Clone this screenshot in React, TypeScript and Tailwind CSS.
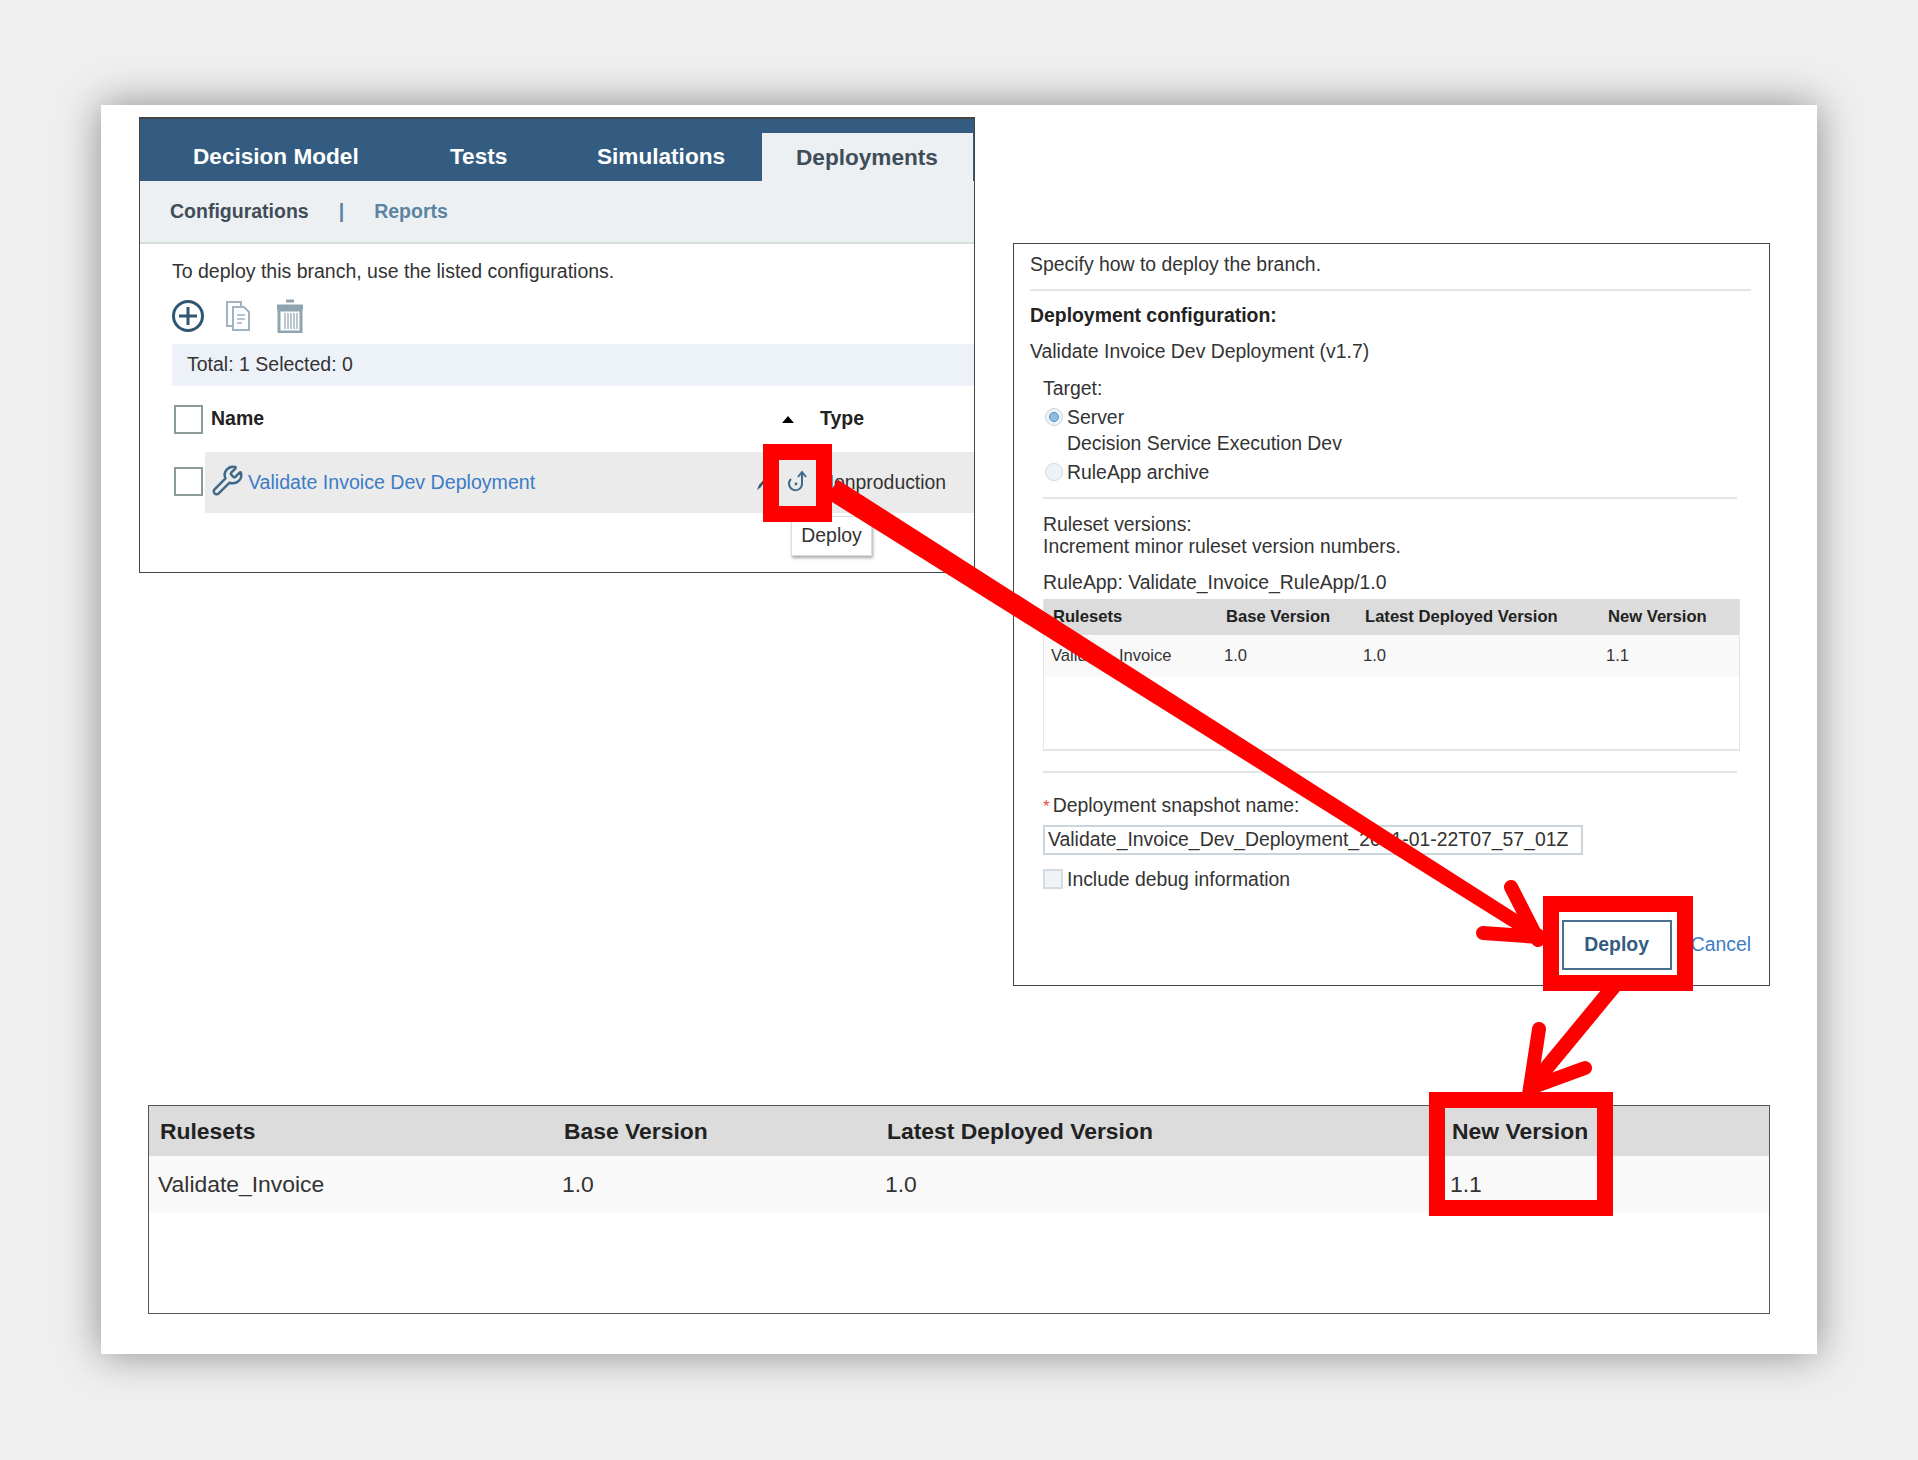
import { Wrench } from "lucide-react";

const sans = "font-['Liberation_Sans',Arial,sans-serif]";

function Checkbox({ className }: { className: string }) {
  return <div className={`h-[29px] w-[29px] shrink-0 border-2 border-[#8b9a9a] bg-white ${className}`} />;
}

function Radio({ selected }: { selected?: boolean }) {
  return (
    <div className="flex h-[18px] w-[18px] shrink-0 items-center justify-center rounded-full border border-[#cdd5dd] bg-[#eef3f8]">
      {selected && <div className="h-[10px] w-[10px] rounded-full border border-[#4b8fc4] bg-[#8fbde0]" />}
    </div>
  );
}

function DeployTabs() {
  return (
    <div className="flex h-[62px] items-end bg-[#335c80] text-[22.6px] font-bold">
      <div className="flex h-[48px] items-start pl-[53px] text-white">
        <span className="mt-[11px] w-[257px] leading-[26px]">Decision Model</span>
        <span className="mt-[11px] w-[147px] leading-[26px]">Tests</span>
        <span className="mt-[11px] w-[165px] leading-[26px]">Simulations</span>
      </div>
      <div className="flex h-[48px] w-[211px] items-start bg-[#edf0f3] pl-[34px] pt-[12px] leading-[26px] text-[#3f4d58]">
        Deployments
      </div>
    </div>
  );
}

function Toolbar() {
  return (
    <div className="mt-[15px] flex h-[36px] items-center pl-[31px]">
      <svg width="34" height="34" viewBox="0 0 34 34" fill="none" stroke="#2f5673" strokeWidth="3">
        <circle cx="17" cy="17" r="14.5" />
        <path d="M17 8v18M8 17h18" />
      </svg>
      <svg className="ml-[20px]" width="26" height="32" viewBox="0 0 26 32" fill="white" stroke="#9fb3c0" strokeWidth="2">
        <path d="M2 2h14v24H2z" />
        <path d="M8 7h11l5 5v18H8z" />
        <path d="M12 15h8M12 19h8M12 23h5" strokeWidth="1.5" />
      </svg>
      <svg className="ml-[25px]" width="28" height="34" viewBox="0 0 28 34" fill="none" stroke="#8fa3b0" strokeWidth="2">
        <path d="M10 2h8" strokeWidth="3" />
        <path d="M1 8h26" strokeWidth="5" />
        <path d="M3 11h22v22H3z" strokeWidth="3" />
        <path d="M9 14v16M12 14v16M15 14v16M18 14v16M21 14v16" strokeWidth="1.2" />
      </svg>
    </div>
  );
}

function ConfigRow() {
  return (
    <div className="relative mt-[18px] flex h-[61px] items-center pl-[33px]">
      <Checkbox className="absolute left-[34px] top-[15px]" />
      <div className="ml-[32px] flex h-[61px] flex-1 items-center bg-[#ebebeb] pl-[6px]">
        <Wrench size={33} strokeWidth={1.8} color="#3f6a8a" className="-translate-y-[2px]" />
        <span className="ml-[4px] w-[508px] text-[19.6px] text-[#3d7cc4]">Validate Invoice Dev Deployment</span>
        <svg width="12" height="16" viewBox="0 0 12 16" className="mr-[52px]">
          <path d="M1 15l2-5 7-8 1 1-6 9z" fill="#2f5673" />
        </svg>
        <span className="text-[19.4px] text-[#333]">Nonproduction</span>
      </div>
      <svg className="absolute left-[647px] top-[17px]" width="22" height="24" viewBox="0 0 22 24" fill="none" stroke="#3f6a8a" strokeWidth="2">
        <path d="M15 4v11a6.5 6.5 0 1 1-11-5" />
        <path d="M11 8l4-5 4 5" />
        <circle cx="9" cy="15" r="1.4" fill="#3f6a8a" stroke="none" />
      </svg>
      <div className="absolute left-[651px] top-[64px] flex h-[40px] w-[81px] items-center justify-center border border-[#ddd] bg-white text-[19.4px] text-[#333] shadow-[1px_2px_3px_rgba(0,0,0,0.35)]">
        Deploy
      </div>
    </div>
  );
}

function LeftPanel() {
  return (
    <div className="h-[456px] w-[836px] shrink-0 border border-t-2 border-[#444] bg-white">
      <DeployTabs />
      <div className="flex h-[63px] items-center border-b-2 border-[#d6dddd] bg-[#edf0f3] text-[19.5px] font-bold">
        <span className="ml-[30px] text-[#3f4d58]">Configurations</span>
        <span className="ml-[30px] text-[#5b84a3]">|</span>
        <span className="ml-[30px] text-[#5b84a3]">Reports</span>
      </div>
      <p className="ml-[32px] mt-[15px] text-[19.5px] leading-[24px] text-[#333]">To deploy this branch, use the listed configurations.</p>
      <Toolbar />
      <div className="ml-[32px] mt-[10px] flex h-[42px] items-center bg-[#edf1f8] pl-[15px] text-[19.5px] text-[#333]">Total: 1 Selected: 0</div>
      <div className="mt-[19px] flex h-[29px] items-center pl-[34px] text-[19.5px] font-bold text-[#222]">
        <Checkbox className="" />
        <span className="-mt-[1px] ml-[8px] w-[571px]">Name</span>
        <div className="h-0 w-0 border-x-[6px] border-b-[7px] border-x-transparent border-b-black" />
        <span className="-mt-[1px] ml-[26px]">Type</span>
      </div>
      <ConfigRow />
    </div>
  );
}

function RulesetTable({ compact }: { compact?: boolean }) {
  const cols = compact ? "grid-cols-[173px_139px_243px_1fr]" : "grid-cols-[404px_323px_565px_1fr]";
  const head = compact ? "h-[36px] text-[16.6px] pl-[9px]" : "h-[50px] text-[22.9px] pl-[11px]";
  const row = compact ? "h-[42px] text-[16.6px] pl-[7px]" : "h-[57px] text-[22.9px] pl-[9px]";
  return (
    <>
      <div className={`grid items-center bg-[#dcdcdc] font-bold text-[#222] ${cols} ${head}`}>
        <span>Rulesets</span>
        <span>Base Version</span>
        <span>Latest Deployed Version</span>
        <span>New Version</span>
      </div>
      <div className={`grid items-center bg-[#f9f9f9] text-[#333] ${cols} ${row}`}>
        <span>Validate_Invoice</span>
        <span>1.0</span>
        <span>1.0</span>
        <span>1.1</span>
      </div>
    </>
  );
}

function RightPanel() {
  return (
    <div className="mt-[126px] h-[743px] w-[757px] shrink-0 border border-[#444] bg-white pl-[16px] pr-[18px] text-[19.4px] text-[#333]">
      <p className="mt-[8px] leading-[24px]">Specify how to deploy the branch.</p>
      <div className="mt-[13px] h-[2px] bg-[#e4e6e6]" />
      <p className="mt-[12px] font-bold leading-[24px] text-[#222]">Deployment configuration:</p>
      <p className="mt-[12px] leading-[24px]">Validate Invoice Dev Deployment (v1.7)</p>
      <div className="ml-[13px]">
        <p className="mt-[13px] leading-[24px]">Target:</p>
        <div className="mt-[5px] flex items-center gap-[4px] pl-[2px] leading-[24px]">
          <Radio selected />
          <span>Server</span>
        </div>
        <p className="ml-[24px] mt-[2px] leading-[24px]">Decision Service Execution Dev</p>
        <div className="mt-[5px] flex items-center gap-[4px] pl-[2px] leading-[24px]">
          <Radio />
          <span>RuleApp archive</span>
        </div>
        <div className="mt-[13px] mr-[14px] h-[2px] bg-[#e4e6e6]" />
        <p className="mt-[14px] leading-[22px]">
          Ruleset versions:
          <br />
          Increment minor ruleset version numbers.
        </p>
        <p className="mt-[13px] leading-[24px]">RuleApp: Validate_Invoice_RuleApp/1.0</p>
        <div className="mt-[5px] mr-[11px] h-[152px] border-b-2 border-x border-[#e4e6e6]">
          <RulesetTable compact />
        </div>
        <div className="mt-[20px] mr-[14px] h-[2px] bg-[#e4e6e6]" />
        <p className="mt-[20px] leading-[24px]">
          <span className="mr-[3px] text-[17px] text-[#e05050]">*</span>
          Deployment snapshot name:
        </p>
        <div className="mt-[6px] flex h-[30px] w-[540px] items-center border-2 border-[#ccd4dc] pl-[3px]">
          Validate_Invoice_Dev_Deployment_2021-01-22T07_57_01Z
        </div>
        <div className="mt-[12px] flex items-center gap-[4px] leading-[24px]">
          <div className="h-[20px] w-[20px] border-2 border-[#d5dbe0] bg-[#eef3f8]" />
          <span>Include debug information</span>
        </div>
      </div>
      <div className="mt-[29px] flex items-center justify-end">
        <div className="flex h-[50px] w-[110px] items-center justify-center border-2 border-[#4a6f8f] font-bold text-[#335c80]">Deploy</div>
        <span className="ml-[19px] text-[#3d7cc4]">Cancel</span>
      </div>
    </div>
  );
}

// red call-outs drawn over the screenshot
function Annotations() {
  return (
    <>
      <svg className="absolute left-0 top-0" width="1918" height="1460" fill="none" stroke="#ff0000" strokeLinecap="round">
        <path d="M837.9 479.7L1543.7 931.1L1536.3 942.9L826.1 498.3Z" fill="#ff0000" stroke="none" />
        <path d="M1511 887L1538 940" strokeWidth="14" />
        <path d="M1483 933L1540 937" strokeWidth="14" />
        <path d="M1615 985L1530 1088" strokeWidth="15" strokeLinecap="butt" />
        <path d="M1539 1029L1530 1088L1585 1068" strokeWidth="14" />
      </svg>
      <div className="absolute left-[763px] top-[444px] h-[78px] w-[69px] border-[16px] border-[#ff0000]" />
      <div className="absolute left-[1543px] top-[896px] h-[95px] w-[150px] border-[16px] border-[#ff0000]" />
      <div className="absolute left-[1429px] top-[1092px] h-[124px] w-[184px] border-[16px] border-[#ff0000]" />
    </>
  );
}

export default function App() {
  return (
    <div className={`relative h-[1460px] w-[1918px] overflow-hidden bg-[#efefef] pl-[101px] pt-[105px] ${sans}`}>
      <div className="h-[1249px] w-[1716px] bg-white pl-[38px] pt-[12px] shadow-[0_0_38px_rgba(0,0,0,0.42)]">
        <div className="flex items-start gap-[38px]">
          <LeftPanel />
          <RightPanel />
        </div>
        <div className="ml-[9px] mt-[119px] h-[209px] w-[1622px] border border-[#555] bg-white">
          <RulesetTable />
        </div>
      </div>
      <Annotations />
    </div>
  );
}
